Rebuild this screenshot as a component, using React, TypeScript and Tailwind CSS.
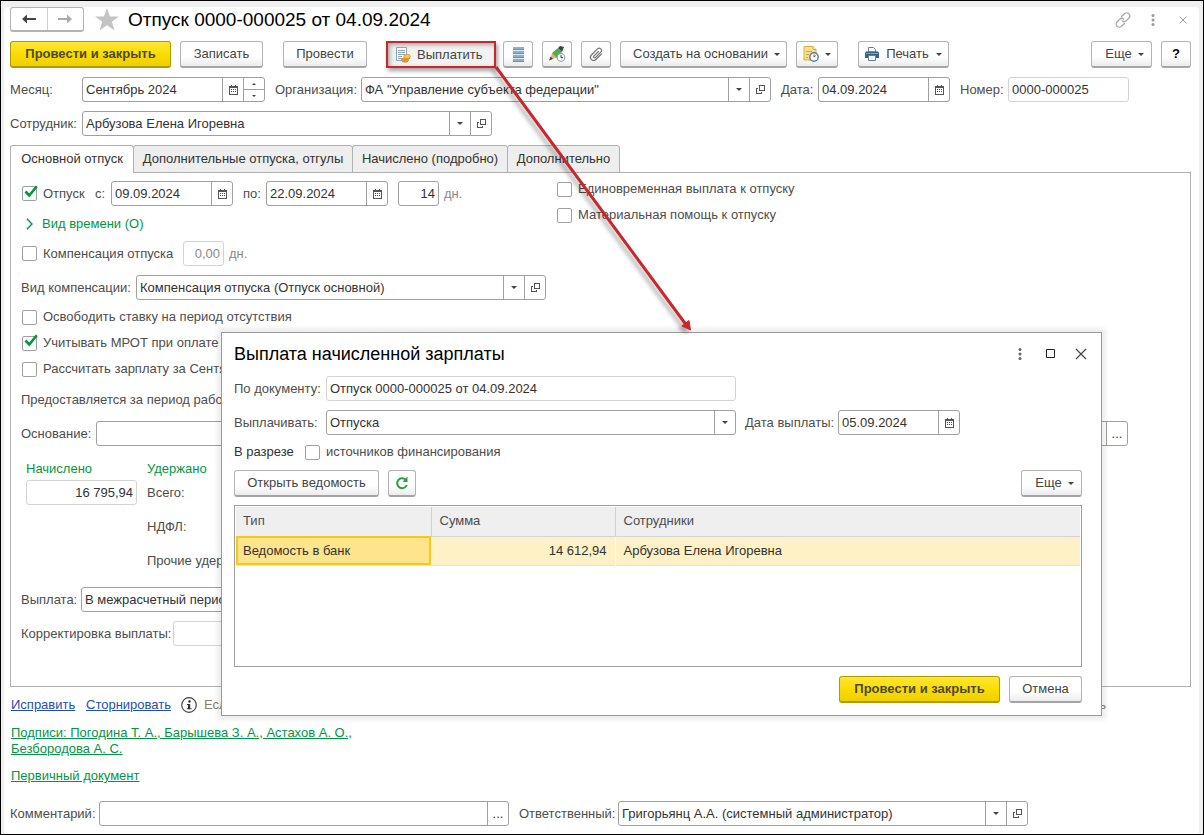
import { useId } from 'react';
import type { ReactNode } from 'react';
import clsx from 'clsx';

type FieldProps = {
	label: string;
	value?: string;
	labelClass?: string;
	className?: string;
	options?: string[];
	cells?: ('calendar' | 'open' | 'dots' | 'spin')[];
	readOnly?: boolean;
	right?: boolean;
	suffix?: string;
	hideLabel?: boolean;
};

const CalendarIcon = () => (
	<svg width="9" height="10" viewBox="0 0 9 10" shapeRendering="crispEdges">
		<path d="M0 1h9v2H0zM0 3h1v7H0zM8 3h1v7H8zM1 9h7v1H1zM2 0h1v1H2zM6 0h1v1H6z" fill="#555" />
		<path d="M2 4h1v1H2zM4 4h1v1H4zM6 4h1v1H6zM2 6h1v1H2zM4 6h1v1H4zM6 6h1v1H6z" fill="#444" />
	</svg>
);

const OpenIcon = () => (
	<svg width="9" height="9" viewBox="0 0 9 9" fill="none" stroke="#555" shapeRendering="crispEdges">
		<path d="M3.5 0.5h5v5h-5zM2 3.5H0.5v5h5V7" />
	</svg>
);

const Caret = ({ className }: { className?: string }) => (
	<svg width="6" height="3" viewBox="0 0 6 3" className={className}>
		<path d="M0 0h6L3 3z" fill="#444" />
	</svg>
);

const DotsIcon = ({ color }: { color: string }) => (
	<svg width="4" height="12" viewBox="0 0 4 12" fill={color}>
		<circle cx="2" cy="1.6" r="1.5" />
		<circle cx="2" cy="6" r="1.5" />
		<circle cx="2" cy="10.4" r="1.5" />
	</svg>
);

const cellClass = 'flex w-[21px] shrink-0 items-center justify-center border-l border-[#a0a0a0]';

function Field({ label, value = '', labelClass, className, options, cells = [], readOnly, right, suffix, hideLabel }: FieldProps) {
	const id = useId();
	return (
		<div className="flex shrink-0 items-center">
			{!hideLabel && (
				<label htmlFor={id} className={clsx('shrink-0 whitespace-nowrap', labelClass)}>
					{label}
				</label>
			)}
			<div
				className={clsx(
					'flex h-[25px] shrink-0 rounded-[3px] border bg-white text-[#333]',
					readOnly ? 'border-[#d4d4d4]' : 'border-[#a0a0a0]',
					className,
				)}
			>
				{options ? (
					<div className="relative flex min-w-0 flex-1">
						<select id={id} defaultValue={value} className="w-full appearance-none bg-transparent pl-[3px] outline-none">
							{options.map((o) => (
								<option key={o}>{o}</option>
							))}
						</select>
						<span className="pointer-events-none absolute inset-y-0 right-0 flex w-[21px] items-center justify-center border-l border-[#a0a0a0]">
							<Caret />
						</span>
					</div>
				) : (
					<input
						id={id}
						type="text"
						aria-label={hideLabel ? label : undefined}
						defaultValue={value}
						readOnly={readOnly}
						className={clsx('w-full min-w-0 flex-1 bg-transparent px-[3px] outline-none', right && 'text-right')}
					/>
				)}
				{cells.map((cell) =>
					cell === 'spin' ? (
						<span key={cell} className="flex w-[21px] shrink-0 flex-col border-l border-[#a0a0a0]">
							<button type="button" aria-label="Больше" className="flex flex-1 items-center justify-center">
								<svg width="4" height="2" viewBox="0 0 4 2"><path d="M0 2L2 0l2 2z" fill="#444" /></svg>
							</button>
							<button type="button" aria-label="Меньше" className="flex flex-1 items-center justify-center border-t border-[#a0a0a0]">
								<svg width="4" height="2" viewBox="0 0 4 2"><path d="M0 0h4L2 2z" fill="#444" /></svg>
							</button>
						</span>
					) : (
						<button key={cell} type="button" aria-label="Выбрать" className={cellClass}>
							{cell === 'calendar' && <CalendarIcon />}
							{cell === 'open' && <OpenIcon />}
							{cell === 'dots' && '...'}
						</button>
					),
				)}
			</div>
			{suffix && <span className="ml-[5px] text-[#8a8a8a]">{suffix}</span>}
		</div>
	);
}

function Check({ label, checked, className }: { label: string; checked?: boolean; className?: string }) {
	return (
		<label className={clsx('relative flex h-4 shrink-0 items-center gap-[6px] whitespace-nowrap', className)}>
			<input
				type="checkbox"
				defaultChecked={checked}
				className="peer size-[15px] shrink-0 appearance-none rounded-[2px] border border-[#a0a0a0] bg-white"
			/>
			<svg
				width="14"
				height="13"
				viewBox="0 0 14 13"
				fill="none"
				className="pointer-events-none absolute -top-px left-[2px] hidden peer-checked:block"
			>
				<path d="M1.5 6.5L5.3 10.5L12.8 1.2" stroke="#009646" strokeWidth="2.6" />
			</svg>
			{label}
		</label>
	);
}

type ButtonProps = { children: ReactNode; className?: string; primary?: boolean; label?: string };

function Button({ children, className, primary, label }: ButtonProps) {
	return (
		<button
			type="button"
			aria-label={label}
			className={clsx(
				'flex h-[27px] shrink-0 items-center justify-center whitespace-nowrap rounded-[3px] border border-b-2 text-[13px]',
				primary
					? 'border-[#b09b00] bg-linear-to-b from-[#ffe62e] via-[#fbdc00] to-[#efcf00] font-bold text-[#4d4833]'
					: 'border-[#b4b4b4] border-b-[#a4a4a4] bg-linear-to-b from-white from-60% to-[#ececec] text-[#444]',
				className,
			)}
		>
			{children}
		</button>
	);
}

const tabs = [
	{ name: 'Основной отпуск', width: 'w-[124px]' },
	{ name: 'Дополнительные отпуска, отгулы', width: 'w-[220px]' },
	{ name: 'Начислено (подробно)', width: 'w-[156px]' },
	{ name: 'Дополнительно', width: 'w-[113px]' },
];

function Header() {
	return (
		<header className="flex h-[25px] items-center">
			<div className="flex h-[25px] w-[74px] rounded-[3px] border border-b-2 border-[#b4b4b4]">
				<button type="button" aria-label="Назад" className="flex flex-1 items-center justify-center border-r border-[#d0d0d0]">
					<svg width="14" height="10" viewBox="0 0 14 10"><path d="M0 5l5-4.500V4h9v2H5v3.500z" fill="#444" /></svg>
				</button>
				<button type="button" aria-label="Вперед" className="flex flex-1 items-center justify-center">
					<svg width="14" height="10" viewBox="0 0 14 10"><path d="M14 5L9 .5V4H0v2h9v3.500z" fill="#aaa" /></svg>
				</button>
			</div>
			<button type="button" aria-label="Избранное" className="ml-[11px]">
				<svg width="24" height="23" viewBox="0 0 24 23">
					<path d="M12 0l3 8.400h9l-7.200 5.300L19.500 22.500 12 17.200 4.500 22.500l2.700-8.800L0 8.400h9z" fill="#c4c4c4" />
				</svg>
			</button>
			<h1 className="ml-[9px] flex-1 whitespace-nowrap text-[19px] text-black">Отпуск 0000-000025 от 04.09.2024</h1>
			<button type="button" aria-label="Ссылка">
				<svg width="16" height="16" viewBox="0 0 16 16" fill="none" stroke="#a5a5a5" strokeWidth="1.200" strokeLinecap="round">
					<path d="M6.500 4.500L9.500 1.800a2.900 2.900 0 0 1 4.500 0 2.900 2.900 0 0 1 0 4.200L11.200 8.800a2.900 2.900 0 0 1-4 0" />
					<path d="M9.500 11.500L6.500 14.200a2.900 2.900 0 0 1-4.500 0 2.900 2.900 0 0 1 0-4.200L4.800 7.200a2.900 2.900 0 0 1 4 0" />
				</svg>
			</button>
			<button type="button" aria-label="Меню" className="ml-5">
				<DotsIcon color="#999" />
			</button>
			<button type="button" aria-label="Закрыть" className="ml-6 mr-1">
				<svg width="8" height="8" viewBox="0 0 8 8"><path d="M.5.500l7 7M7.500.500l-7 7" stroke="#999" /></svg>
			</button>
		</header>
	);
}

function Toolbar() {
	return (
		<div className="mt-[9px] flex items-center">
			<Button primary className="w-[161px]">Провести и закрыть</Button>
			<Button className="ml-[9px] w-[83px]">Записать</Button>
			<Button className="ml-5 w-[84px]">Провести</Button>
			<button
				type="button"
				className="ml-[19px] flex h-[27px] w-[110px] shrink-0 items-center gap-[6px] border-2 border-[#c8282d] bg-[#f2f2f2] pl-[7px] text-[#444] shadow-[2px_3px_4px_rgba(0,0,0,0.35),inset_2px_2px_4px_rgba(0,0,0,0.3)]"
			>
				<svg width="16" height="16" viewBox="0 0 16 16">
					<path d="M1.500.500h10v13h-10z" fill="#fafcfd" stroke="#8fa5b5" />
					<path d="M3 3.500h7M3 5.500h7M3 7.500h7M3 9.500h4M3 11.500h4" stroke="#8fa5b5" />
					<ellipse cx="10" cy="13" rx="3.500" ry="2.200" fill="#e89a28" stroke="#b87820" strokeWidth=".6" />
					<ellipse cx="12" cy="9.500" rx="3.300" ry="2.300" fill="#f8c84a" stroke="#c88a20" strokeWidth=".6" />
					<path d="M9 11.500c1 1.200 5 1.200 6.200-.5" stroke="#e08a20" fill="none" />
				</svg>
				Выплатить
			</button>
			<Button label="Список" className="ml-[7px] w-[30px]">
				<svg width="11" height="15" viewBox="0 0 11 15" shapeRendering="crispEdges">
					<path d="M0 0h11v3H0zM0 4h11v3H0zM0 8h11v3H0zM0 12h11v3H0z" fill="#8fb0c6" />
					<path d="M0 3.500h11M0 7.500h11M0 11.500h11" stroke="#dce8f0" />
					<path d="M0 2.500h11M0 6.500h11M0 10.500h11M0 14.500h11" stroke="#6c93ae" />
				</svg>
			</Button>
			<Button label="Правка" className="ml-[9px] w-[30px]">
				<svg width="17" height="16" viewBox="0 0 17 16">
					<path d="M3 7l6-5 4 4-5 5.500-5 1z" fill="#4ab04e" />
					<path d="M9 2l2-2 4 1-2 5z" fill="#37474f" />
					<path d="M3 7l4.500 4.500L1 14z" fill="#e8b45a" />
					<path d="M0 14.500l1.500-4L4 13z" fill="#37474f" />
					<circle cx="12" cy="11.500" r="3.800" fill="#fff" stroke="#8fa5b5" strokeWidth="1.200" />
					<path d="M12 9.200v2.500h2" stroke="#333" fill="none" />
				</svg>
			</Button>
			<Button label="Файлы" className="ml-[9px] w-[30px]">
				<svg width="14" height="14" viewBox="0 0 14 14" fill="none" stroke="#777" strokeWidth="1.200" strokeLinecap="round">
					<path d="M9.500 4.500L4.800 9.200a1 1 0 0 0 1.500 1.500L11.800 5.200a2.300 2.300 0 0 0-3.300-3.300L2.400 8a3.100 3.100 0 0 0 4.400 4.500L12.500 7" />
				</svg>
			</Button>
			<Button className="ml-[9px] w-[167px] gap-[6px] pl-[6px]">
				Создать на основании
				<Caret />
			</Button>
			<Button label="Напоминание" className="ml-[9px] w-[42px] gap-[6px]">
				<svg width="16" height="16" viewBox="0 0 16 16">
					<path d="M1 .500h9l3 3V14H1z" fill="#fbe08a" stroke="#d8ab42" />
					<path d="M10 .500v3h3" fill="#fff3c0" stroke="#d8ab42" />
					<path d="M3 5.500h6M3 8.500h3M3 11.500h2" stroke="#d0a440" />
					<circle cx="11" cy="11" r="4.200" fill="#fff" stroke="#4f7db0" strokeWidth="1.400" />
					<path d="M11 8.500V11l1.800-1.500" stroke="#c33" fill="none" />
				</svg>
				<Caret />
			</Button>
			<Button className="ml-5 w-[91px] gap-[7px]">
				<svg width="14" height="14" viewBox="0 0 14 14">
					<path d="M3.500.500h5l2 2V5h-7z" fill="#fff" stroke="#5f7f98" />
					<path d="M1 4.500h12l1 1V11H0V5.500z" fill="#33608c" />
					<path d="M1 6.500h12" stroke="#7fa4c4" />
					<path d="M3.500 8.500h7v5h-7z" fill="#fff" stroke="#5f7f98" />
				</svg>
				Печать
				<Caret />
			</Button>
			<Button className="ml-auto w-[61px] gap-[6px] pl-[6px]">
				Еще
				<Caret />
			</Button>
			<Button className="ml-[9px] w-[30px] font-bold text-black">?</Button>
		</div>
	);
}

function VacationTab() {
	return (
		<section className="flex items-start border border-[#b0b0b0] pl-[10px] pb-10 pt-2">
			<div className="flex w-[536px] shrink-0 flex-col">
				<div className="flex items-center pl-px">
					<Check label="Отпуск" checked className="w-[73px]" />
					<Field label="с:" labelClass="w-4" className="w-[122px]" value="09.09.2024" cells={['calendar']} />
					<Field label="по:" labelClass="ml-[10px] w-[23px]" className="w-[122px]" value="22.09.2024" cells={['calendar']} />
					<div className="ml-[10px]">
						<Field label="Дней отпуска" hideLabel className="w-[41px]" value="14" right suffix="дн." />
					</div>
				</div>
				<button type="button" className="mt-2 flex h-[19px] items-center gap-[9px] pl-[5px] text-[#009646]">
					<svg width="7" height="12" viewBox="0 0 7 12" fill="none"><path d="M.8.800L6 6 .8 11.200" stroke="#009646" strokeWidth="1.400" /></svg>
					Вид времени (О)
				</button>
				<div className="mt-2 flex items-center pl-px">
					<Check label="Компенсация отпуска" className="w-[161px]" />
					<div className="[&_input]:text-[#8a8a8a]">
						<Field label="Дней компенсации" hideLabel className="w-[41px]" value="0,00" readOnly right suffix="дн." />
					</div>
				</div>
				<div className="mt-[9px]">
					<Field
						label="Вид компенсации:"
						labelClass="w-[115px]"
						className="w-[410px]"
						value="Компенсация отпуска (Отпуск основной)"
						options={['Компенсация отпуска (Отпуск основной)']}
						cells={['open']}
					/>
				</div>
				<div className="mt-[9px] flex flex-col gap-[10px] pl-px">
					<Check label="Освободить ставку на период отсутствия" />
					<Check label="Учитывать МРОТ при оплате по среднему" checked />
					<Check label="Рассчитать зарплату за Сентябрь 2024" />
				</div>
				<p className="mt-[15px] h-[15px] whitespace-nowrap leading-[15px]">Предоставляется за период работы</p>
				<div className="mt-3.5">
					<Field label="Основание:" labelClass="w-[75px]" className="w-[1032px]" cells={['dots']} />
				</div>
				<div className="mt-[15px] flex pl-[5px]">
					<div className="w-[121px]">
						<h2 className="h-[15px] leading-[15px] text-[#009646]">Начислено</h2>
						<div className="mt-1">
							<Field label="Начислено" hideLabel className="w-[111px]" value="16 795,94" readOnly right />
						</div>
					</div>
					<div>
						<h2 className="h-[15px] leading-[15px] text-[#009646]">Удержано</h2>
						<div className="mt-1 flex flex-col gap-[9px]">
							<p className="h-[25px] leading-[25px]">Всего:</p>
							<p className="h-[25px] leading-[25px]">НДФЛ:</p>
							<p className="h-[25px] leading-[25px]">Прочие удержания:</p>
						</div>
					</div>
				</div>
				<div className="mt-3.5 flex flex-col gap-[9px]">
					<Field
						label="Выплата:"
						labelClass="w-[60px]"
						className="w-[300px]"
						value="В межрасчетный период"
						options={['В межрасчетный период', 'С зарплатой']}
					/>
					<Field label="Корректировка выплаты:" labelClass="w-[152px]" className="w-[111px]" readOnly right />
				</div>
			</div>
			<div className="flex flex-col gap-[10px]">
				<Check label="Единовременная выплата к отпуску" />
				<Check label="Материальная помощь к отпуску" />
			</div>
		</section>
	);
}

function PayDialog() {
	return (
		<div
			role="dialog"
			aria-label="Выплата начисленной зарплаты"
			className="absolute left-[220px] top-[331px] w-[881px] border border-[#9a9a9a] bg-white pb-3 pl-3 pr-[19px] pt-2 shadow-[0_0_4px_4px_rgba(0,0,0,0.07)]"
		>
			<div className="flex h-[25px] items-center">
				<h2 className="flex-1 text-[18px] text-black">Выплата начисленной зарплаты</h2>
				<button type="button" aria-label="Меню"><DotsIcon color="#666" /></button>
				<button type="button" aria-label="Развернуть" className="ml-6">
					<svg width="9" height="9" viewBox="0 0 9 9"><path d="M.5.500h8v8h-8z" fill="none" stroke="#222" /></svg>
				</button>
				<button type="button" aria-label="Закрыть" className="-mr-[5px] ml-5">
					<svg width="12" height="12" viewBox="0 0 12 12"><path d="M1 1l10 10M11 1L1 11" stroke="#444" strokeWidth="1.200" /></svg>
				</button>
			</div>
			<div className="mt-[10px] flex flex-col gap-[9px]">
				<Field label="По документу:" labelClass="w-[92px]" className="w-[410px]" value="Отпуск 0000-000025 от 04.09.2024" readOnly />
				<div className="flex">
					<Field label="Выплачивать:" labelClass="w-[92px]" className="w-[410px]" value="Отпуска" options={['Отпуска', 'Зарплата']} />
					<Field label="Дата выплаты:" labelClass="ml-[9px] w-[93px]" className="w-[122px]" value="05.09.2024" cells={['calendar']} />
				</div>
			</div>
			<div className="mt-[9px] flex items-center">
				<span className="w-[71px] text-[#333]">В разрезе</span>
				<Check label="источников финансирования" />
			</div>
			<div className="mt-[10px] flex">
				<Button className="w-[145px]">Открыть ведомость</Button>
				<Button label="Обновить" className="ml-[9px] w-7">
					<svg width="14" height="14" viewBox="0 0 14 14" fill="none">
						<path d="M11.800 9A5 5 0 1 1 10.500 3.500" stroke="#28a03c" strokeWidth="2" />
						<path d="M12.500.500v5.500H7.500z" fill="#28a03c" />
					</svg>
				</Button>
				<Button className="ml-auto w-[61px] gap-[6px] pl-[6px]">
					Еще
					<Caret />
				</Button>
			</div>
			<div className="mt-2 h-[162px] border border-[#a0a0a0] p-px">
				<table className="w-full table-fixed border-collapse text-left">
					<colgroup>
						<col className="w-[195px]" />
						<col className="w-[184px]" />
						<col />
					</colgroup>
					<thead>
						<tr className="h-[29px] border-b border-[#d4d4d4] bg-[#efefef]">
							<th className="border-r border-[#d0d0d0] px-[7px] font-normal">Тип</th>
							<th className="border-r border-[#d0d0d0] px-2 font-normal">Сумма</th>
							<th className="px-2 font-normal">Сотрудники</th>
						</tr>
					</thead>
					<tbody>
						<tr className="h-[29px] border-b border-[#e4e4e4] bg-[#fef1c6] text-[#333]">
							<td className="bg-[#fee48b] px-[7px] outline-2 -outline-offset-2 outline-[#fbc520]">Ведомость в банк</td>
							<td className="border-r border-white px-2 text-right">14 612,94</td>
							<td className="px-2">Арбузова Елена Игоревна</td>
						</tr>
					</tbody>
				</table>
			</div>
			<div className="mt-[9px] flex justify-end gap-[9px]">
				<Button primary className="w-[161px]">Провести и закрыть</Button>
				<Button className="w-[73px]">Отмена</Button>
			</div>
		</div>
	);
}

export default function App() {
	return (
		<div className="relative min-h-screen overflow-hidden border border-black bg-[#f1f0f1] pl-[3px] pr-1 pt-[6px] font-['Liberation_Sans',Arial,sans-serif] text-[13px] leading-4 text-[#4d4d4d]">
			<main className="rounded-t-[4px] bg-white pb-2 pl-[6px] pr-2">
				<Header />
				<Toolbar />
				<div className="mt-[9px] flex gap-[10px]">
					<Field label="Месяц:" labelClass="w-[72px]" className="w-[183px]" value="Сентябрь 2024" cells={['calendar', 'spin']} />
					<Field
						label="Организация:"
						labelClass="w-[86px]"
						className="w-[410px]"
						value={'ФА "Управление субъекта федерации"'}
						options={['ФА "Управление субъекта федерации"']}
						cells={['open']}
					/>
					<Field label="Дата:" labelClass="w-[37px]" className="w-[132px]" value="04.09.2024" cells={['calendar']} />
					<Field label="Номер:" labelClass="w-12" className="w-[121px]" value="0000-000025" readOnly />
				</div>
				<div className="mt-[9px]">
					<Field
						label="Сотрудник:"
						labelClass="w-[72px]"
						className="w-[410px]"
						value="Арбузова Елена Игоревна"
						options={['Арбузова Елена Игоревна']}
						cells={['open']}
					/>
				</div>
				<div role="tablist" className="relative mt-[9px] -mb-px flex">
					{tabs.map((tab, i) => (
						<button
							key={tab.name}
							type="button"
							role="tab"
							aria-selected={i === 0}
							className={clsx(
								'-mr-px h-7 whitespace-nowrap rounded-t-[3px] border border-[#b0b0b0] text-[#333]',
								i === 0 ? 'border-b-white bg-white' : 'bg-[#eee]',
								tab.width,
							)}
						>
							{tab.name}
						</button>
					))}
				</div>
				<VacationTab />
				<div className="mt-[9px] flex h-[18px] items-center pl-px">
					<a href="#fix" className="w-[75px] text-[#1f4fb5] underline">Исправить</a>
					<a href="#storno" className="w-[95px] text-[#1f4fb5] underline">Сторнировать</a>
					<svg width="16" height="16" viewBox="0 0 16 16">
						<circle cx="8" cy="8" r="7.300" fill="none" stroke="#444" strokeWidth="1.200" />
						<circle cx="8.500" cy="4.500" r="1.300" fill="#333" />
						<path d="M6 7h3.200v4.200H10.500v1H5.800v-1H7V8H6z" fill="#333" />
					</svg>
					<p className="ml-[7px] flex w-[902px] justify-between whitespace-nowrap text-[#857f70]">
						<span>Если</span>
						<span>исправить</span>
					</p>
				</div>
				<div className="mt-[11px] flex w-[360px] flex-col items-start gap-[11px] pl-px text-[#009646]">
					<a href="#signs" className="underline">
						Подписи: Погодина Т. А., Барышева З. А., Астахов А. О., Безбородова А. С.
					</a>
					<a href="#primary" className="underline">Первичный документ</a>
				</div>
				<div className="mt-[17px] flex gap-[10px]">
					<Field label="Комментарий:" labelClass="w-[89px]" className="w-[410px]" cells={['dots']} />
					<Field
						label="Ответственный:"
						labelClass="w-[99px]"
						className="w-[410px]"
						value="Григорьянц А.А. (системный администратор)"
						options={['Григорьянц А.А. (системный администратор)']}
						cells={['open']}
					/>
				</div>
			</main>
			<PayDialog />
			{/* pointer from the pay button to the dialog */}
			<svg className="pointer-events-none absolute left-[490px] top-[60px] drop-shadow-[-3px_3px_2px_rgba(0,0,0,0.35)]" width="210" height="275" viewBox="0 0 210 275">
				<path d="M5 6L196 265" stroke="#c8282d" strokeWidth="3" />
				<path d="M199.500 269L191 265L198 259.500z" fill="#c8282d" stroke="#c8282d" />
			</svg>
		</div>
	);
}
